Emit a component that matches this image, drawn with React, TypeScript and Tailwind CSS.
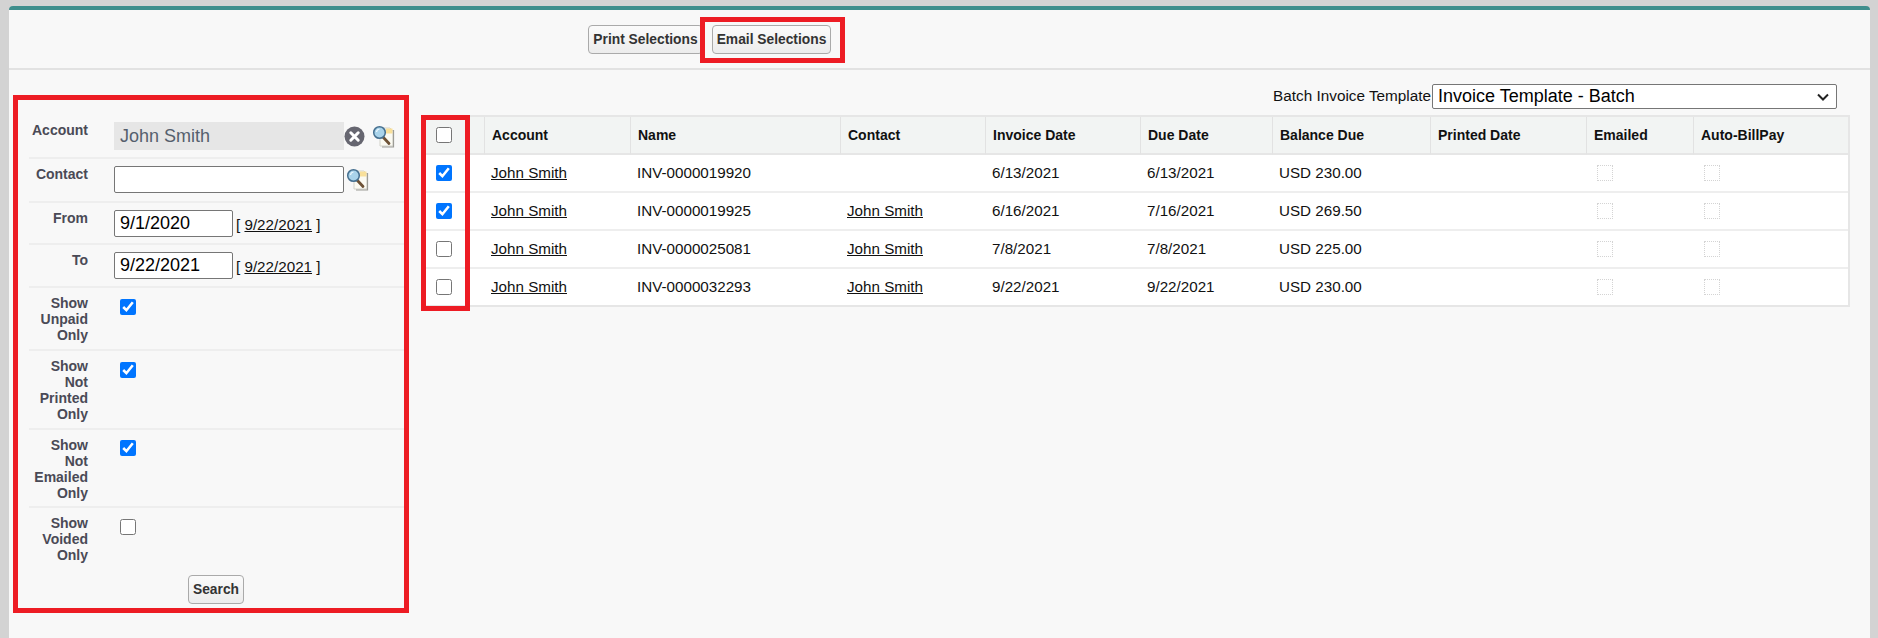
import React from "react";

function LookupIcon() {
  return (
    <svg width="23" height="23" viewBox="0 0 23 23" className="shrink-0">
      <path d="M8 3h10l3 3v15H8z" fill="#fbfaf2" stroke="#d2d2ca" strokeWidth="1" />
      <rect x="14" y="3.500" width="6.500" height="5" fill="#f9e09a" />
      <path d="M21.500 5v17H10" fill="none" stroke="#9c9c96" strokeWidth="1.200" />
      <path d="M11 12l6 6.500" stroke="#6e5236" strokeWidth="2.800" strokeLinecap="round" />
      <circle cx="7.500" cy="7.500" r="5.800" fill="#a9d3ea" stroke="#456f8f" strokeWidth="1.500" />
      <path d="M4.500 7a3.500 3.500 0 0 1 3-3" stroke="#eef8fd" strokeWidth="1.200" fill="none" />
    </svg>
  );
}

function ClearIcon() {
  return (
    <svg width="21" height="21" viewBox="0 0 21 21" className="shrink-0">
      <circle cx="10.500" cy="10.500" r="10" fill="#666670" />
      <path d="M6.800 6.800l7.400 7.400M14.200 6.800l-7.400 7.400" stroke="#fff" strokeWidth="3" strokeLinecap="round" />
    </svg>
  );
}

function Row({ label, className, children }: { label: string; className: string; children?: React.ReactNode }) {
  return (
    <div className={`flex border-b-2 border-[#eeeeee] pt-[7px] ${className}`}>
      <div className="w-[59px] shrink-0 text-right text-[14px] leading-4 font-bold text-[#4a4a56]">{label}</div>
      <div className="ml-[26px] flex items-start">{children}</div>
    </div>
  );
}

function DateField({ value }: { value: string }) {
  return (
    <>
      <input
        readOnly
        value={value}
        className="h-[27px] w-[119px] rounded-[2px] border border-[#767676] bg-white px-[5px] text-[18px] text-black"
      />
      <span className="ml-[3px] mt-[6px] text-[15.2px] leading-[18px] text-[#111]">
        [ <a className="underline">9/22/2021</a> ]
      </span>
    </>
  );
}

function Check({ checked, className }: { checked?: boolean; className?: string }) {
  return <input type="checkbox" readOnly checked={!!checked} className={`block h-4 w-4 ${className ?? ""}`} />;
}

function Dotted() {
  return <div className="h-[16px] w-4 border border-dotted border-[#d4d4d4]" />;
}

const rows = [
  { checked: true, name: "INV-0000019920", contact: "", inv: "6/13/2021", due: "6/13/2021", bal: "USD 230.00" },
  { checked: true, name: "INV-0000019925", contact: "John Smith", inv: "6/16/2021", due: "7/16/2021", bal: "USD 269.50" },
  { checked: false, name: "INV-0000025081", contact: "John Smith", inv: "7/8/2021", due: "7/8/2021", bal: "USD 225.00" },
  { checked: false, name: "INV-0000032293", contact: "John Smith", inv: "9/22/2021", due: "9/22/2021", bal: "USD 230.00" },
];

const headers = ["Account", "Name", "Contact", "Invoice Date", "Due Date", "Balance Due", "Printed Date", "Emailed", "Auto-BillPay"];
const thClass = "border-l border-[#e2e2e2] px-[7px] text-left text-[14px] font-bold text-[#111]";
const tdClass = "px-[7px] text-[15.2px] text-[#111]";
const btnClass =
  "h-[29px] rounded-[4px] border border-[#aaaaaa] bg-gradient-to-b from-[#fbfbfb] to-[#ececec] pt-[1px] text-[13.8px] font-bold text-[#333]";

export default function App() {
  return (
    <div className="h-[638px] overflow-hidden bg-[#d3d3d3] pl-[9px] pr-[8px] pt-[6px] font-['Liberation_Sans',Arial,sans-serif]">
      <div className="h-[640px] rounded-t-[4px] border-t-4 border-[#3e8e8c] bg-[#f8f8f8]">
        <div className="flex h-[60px] border-b-2 border-[#e2e2e2] pl-[579px] pt-[15px]">
          <button className={`w-[115px] ${btnClass}`}>Print Selections</button>
          <div className="relative ml-[9px]">
            <button className={`block w-[119px] ${btnClass}`}>Email Selections</button>
            <div className="pointer-events-none absolute -left-[12px] -top-[8px] h-[46px] w-[145px] border-[5px] border-[#ed1c24]" />
          </div>
        </div>
        <div className="flex">
          <div className="ml-[4px] mt-[25px] h-[518px] w-[396px] border-[5px] border-[#ed1c24] pl-[11px]">
            <Row label="Account" className="h-[59px] pt-[22px]">
              <div className="flex items-center">
                <div className="flex h-[28px] w-[230px] items-center bg-[#e6e6e6] pl-[6px] text-[18px] text-[#555f6d]">John Smith</div>
                <ClearIcon />
                <div className="ml-[7px]"><LookupIcon /></div>
              </div>
            </Row>
            <Row label="Contact" className="h-[44px]">
              <input readOnly className="h-[27px] w-[230px] rounded-[2px] border border-[#767676] bg-white" />
              <div className="ml-[2px] mt-[2px]"><LookupIcon /></div>
            </Row>
            <Row label="From" className="h-[42px]"><DateField value="9/1/2020" /></Row>
            <Row label="To" className="h-[43px]"><DateField value="9/22/2021" /></Row>
            <Row label="Show Unpaid Only" className="h-[63px]"><Check checked className="ml-[6px] mt-[4px]" /></Row>
            <Row label="Show Not Printed Only" className="h-[79px]"><Check checked className="ml-[6px] mt-[4px]" /></Row>
            <Row label="Show Not Emailed Only" className="h-[78px]"><Check checked className="ml-[6px] mt-[3px]" /></Row>
            <div className="flex h-[67px] pt-[7px]">
              <div className="w-[59px] shrink-0 text-right text-[14px] leading-4 font-bold text-[#4a4a56]">Show Voided Only</div>
              <div className="ml-[26px]"><Check className="ml-[6px] mt-[4px]" /></div>
            </div>
            <div className="flex justify-center pr-[1px]">
              <button className={`w-[56px] ${btnClass}`}>Search</button>
            </div>
          </div>
          <div className="ml-[12px] w-[1429px]">
            <div className="mt-[14px] flex h-[24px] items-center justify-end pr-[13px]">
              <span className="mr-[1px] text-[15.3px] text-[#111]">Batch Invoice Template</span>
              <div className="relative">
                <select className="block h-[25px] w-[405px] appearance-none rounded-[2px] border border-[#767676] bg-white pl-[5px] text-[18px] leading-[20px] text-black">
                  <option>Invoice Template - Batch</option>
                </select>
                <svg width="12" height="8" viewBox="0 0 12 8" className="pointer-events-none absolute right-[8px] top-[9px]">
                  <path d="M1 1.500l5 5 5-5" fill="none" stroke="#222" strokeWidth="2" />
                </svg>
              </div>
            </div>
            <div className="relative mt-[7px]">
              <table className="w-[1429px] table-fixed border-separate border-spacing-0 border-2 border-[#e6e6e6] bg-white">
                <colgroup>
                  <col className="w-[61px]" />
                  <col className="w-[146px]" />
                  <col className="w-[210px]" />
                  <col className="w-[145px]" />
                  <col className="w-[155px]" />
                  <col className="w-[132px]" />
                  <col className="w-[158px]" />
                  <col className="w-[156px]" />
                  <col className="w-[107px]" />
                  <col />
                </colgroup>
                <thead>
                  <tr className="h-[38px] bg-[#f2f4f3]">
                    <th className="border-b-2 border-[#e6e6e6] pl-[13px]"><Check /></th>
                    {headers.map((h) => (
                      <th key={h} className={`border-b-2 border-b-[#e6e6e6] ${thClass}`}>{h}</th>
                    ))}
                  </tr>
                </thead>
                <tbody>
                  {rows.map((r, i) => {
                    const b = i < 3 ? "border-b-2 border-[#eeeeee]" : "";
                    return (
                      <tr key={r.name} className={i < 3 ? "h-[38px]" : "h-[36px]"}>
                        <td className={`${b} pl-[13px]`}><Check checked={r.checked} /></td>
                        <td className={`${b} ${tdClass}`}><a className="underline">John Smith</a></td>
                        <td className={`${b} ${tdClass}`}>{r.name}</td>
                        <td className={`${b} ${tdClass}`}>{r.contact && <a className="underline">{r.contact}</a>}</td>
                        <td className={`${b} ${tdClass}`}>{r.inv}</td>
                        <td className={`${b} ${tdClass}`}>{r.due}</td>
                        <td className={`${b} ${tdClass}`}>{r.bal}</td>
                        <td className={`${b} ${tdClass}`}></td>
                        <td className={`${b} px-[11px]`}><Dotted /></td>
                        <td className={`${b} px-[11px]`}><Dotted /></td>
                      </tr>
                    );
                  })}
                </tbody>
              </table>
              <div className="pointer-events-none absolute left-0 top-0 h-[196px] w-[49px] border-[5px] border-[#ed1c24]" />
            </div>
          </div>
        </div>
      </div>
    </div>
  );
}
